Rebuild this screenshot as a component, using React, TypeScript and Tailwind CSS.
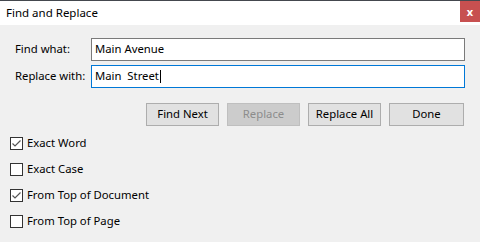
const FONT = 'font-["Noto_Sans","Liberation_Sans",sans-serif]';

function Checkbox({ label, checked }: { label: string; checked?: boolean }) {
  return (
    <div className="flex h-[26px] items-center">
      <div className="relative h-[13px] w-[13px] border border-[#333333] bg-white">
        {checked && (
          <svg width="11" height="11" viewBox="0 0 11 11" className="absolute left-0 top-0">
            <path d="M1.5 5.5 L4 8 L9.5 2.5" fill="none" stroke="#555555" strokeWidth="1.2" />
          </svg>
        )}
      </div>
      <span className="ml-[4px] text-[11.3px] leading-none text-black">{label}</span>
    </div>
  );
}

function Button({ label, width, disabled }: { label: string; width: string; disabled?: boolean }) {
  return (
    <div
      className={`flex h-[23px] ${width} items-center justify-center border text-[11.3px] ${
        disabled
          ? 'border-[#bfbfbf] bg-[#cccccc] text-[#8c8c8c]'
          : 'border-[#adadad] bg-[#e1e1e1] text-black'
      }`}
    >
      {label}
    </div>
  );
}

export default function App() {
  return (
    <div className={`flex h-[242px] w-[480px] flex-col overflow-hidden border-t border-[#44484e] ${FONT}`}>
      {/* Title bar */}
      <div className="flex h-[24px] shrink-0 items-start justify-between bg-white">
        <span className="pl-[6px] pt-[4px] text-[11.5px] leading-[16px] text-black">Find and Replace</span>
        <div className="flex h-[21px] w-[20px] items-center justify-center bg-[#c75050] pb-[1px] text-[11px] font-bold leading-none text-white">
          x
        </div>
      </div>

      <div className="flex flex-1 flex-col bg-[#f0f0f0]">
        {/* Fields */}
        <div className="mt-[13px] flex items-center pl-[15px]">
          <span className="w-[76px] text-[11.3px] text-black">Find what:</span>
          <div className="flex h-[23px] w-[374px] items-center border border-[#7a7a7a] bg-white pl-[3px] text-[11.3px] text-black">
            Main Avenue
          </div>
        </div>
        <div className="mt-[4px] flex items-center pl-[15px]">
          <span className="w-[76px] text-[11.3px] text-black">Replace with:</span>
          <div className="flex h-[23px] w-[374px] items-center border border-[#0078d7] bg-white pl-[3px] text-[11.3px] text-black">
            <span className="whitespace-pre">Main  Street</span>
            <span className="ml-[1px] h-[13px] w-[1px] bg-black" />
          </div>
        </div>

        {/* Buttons */}
        <div className="mt-[15px] flex justify-end gap-[8px] pr-[16px]">
          <Button label="Find Next" width="w-[73px]" />
          <Button label="Replace" width="w-[73px]" disabled />
          <Button label="Replace All" width="w-[73px]" />
          <Button label="Done" width="w-[75px]" />
        </div>

        {/* Options */}
        <div className="mt-[4px] flex flex-col pl-[10px]">
          <Checkbox label="Exact Word" checked />
          <Checkbox label="Exact Case" />
          <Checkbox label="From Top of Document" checked />
          <Checkbox label="From Top of Page" />
        </div>
      </div>
    </div>
  );
}
